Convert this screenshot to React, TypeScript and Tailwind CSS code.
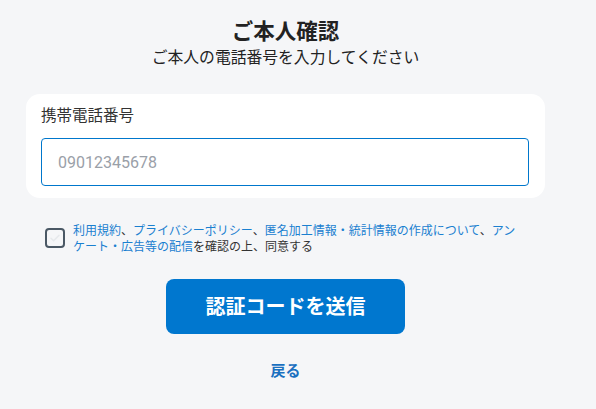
export default function App() {
  return (
    <div
      className="min-h-screen w-full bg-[#f5f6f8] text-[#222]"
      style={{ fontFamily: 'Roboto, "Noto Sans CJK JP", sans-serif' }}
    >
      <div className="ml-[26px] w-[519px] pt-[17px]">
        <h1 className="text-center text-[21.5px] font-bold leading-[30px] text-[#222]">
          ご本人確認
        </h1>
        <p className="text-center text-[15.8px] leading-[22px] text-[#222]">
          ご本人の電話番号を入力してください
        </p>

        <div className="mt-[25px] rounded-[14px] bg-white px-[15px] pt-[11px] pb-[12px]">
          <label className="block text-[15.5px] font-normal leading-[22px] text-[#333]">
            携帯電話番号
          </label>
          <input
            type="tel"
            autoFocus
            placeholder="09012345678"
            className="mt-[11px] h-[48px] w-[488px] rounded-[4px] border border-[#0077cc] bg-white px-[16px] text-[16px] text-[#222] caret-[#222] outline-none placeholder:text-[#9aa0a8]"
          />
        </div>

        <div className="mt-[25px] flex items-start gap-[8px] pl-[19px]">
          <div className="mt-[5px] flex h-[20px] w-[20px] shrink-0 items-center justify-center rounded-[4px] border-2 border-[#4a5865]">
            <svg width="12" height="12" viewBox="0 0 12 12" fill="none">
              <path d="M2 6.2l2.6 2.6L10 3.4" stroke="#e6e9ec" strokeWidth="1.5" strokeLinecap="round" strokeLinejoin="round" />
            </svg>
          </div>
          <p className="w-[450px] text-[12px] leading-[16px] text-[#333]">
            <span className="text-[#1a80d0]">利用規約</span>、
            <span className="text-[#1a80d0]">プライバシーポリシー</span>、
            <span className="text-[#1a80d0]">匿名加工情報・統計情報の作成について</span>、
            <span className="text-[#1a80d0]">アンケート・広告等の配信</span>
            を確認の上、同意する
          </p>
        </div>

        <div className="mt-[24px] flex justify-center">
          <button
            type="button"
            className="h-[55px] w-[239px] rounded-[8px] bg-[#0077cf] text-[20px] font-bold text-white"
          >
            認証コードを送信
          </button>
        </div>

        <div className="mt-[25px] text-center">
          <span className="text-[15px] font-bold text-[#1a70c0]">戻る</span>
        </div>
      </div>
    </div>
  );
}
